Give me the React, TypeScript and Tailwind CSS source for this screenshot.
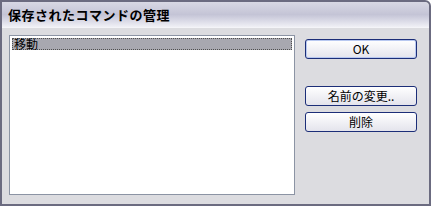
import React from 'react';

const FONT = { fontFamily: '"MS UI Gothic", "Noto Sans CJK JP", "Liberation Sans", sans-serif' };

const DialogButton: React.FC<{ label: string; primary?: boolean }> = ({ label, primary }) => (
  <button
    className={`h-[20px] w-[112px] rounded-[3px] border bg-gradient-to-b from-white to-[#e4e4ec] text-[12px] leading-none text-black ${
      primary ? 'border-[#1c2e78] shadow-[inset_0_0_0_1px_#b8c8f0]' : 'border-[#1c2e78]'
    }`}
  >
    {label}
  </button>
);

export default function App() {
  return (
    <div className="h-[206px] w-[431px] bg-white" style={FONT}>
      <div className="flex h-full w-full flex-col rounded-tr-[6px] border-[2px] border-[#6b6b80] bg-[#dcdce0]">
        {/* title bar */}
        <div className="flex h-[26px] items-center rounded-tr-[5px] border-b border-[#f4f4f8] bg-gradient-to-b from-[#d8d8e4] via-[#c4c4d6] to-[#f0f0f6] pl-[6px]">
          <span className="text-[13px] font-bold tracking-[0.5px] text-black">保存されたコマンドの管理</span>
        </div>
        <div className="flex flex-1 gap-[10px] pl-[7px] pt-[7px] pb-[8px]">
          {/* list */}
          <div className="h-[160px] w-[286px] border border-[#8c94a4] bg-white p-[2px]">
            <div className="h-[12px] border border-dotted border-[#505050] bg-[#a8a8b0] pl-[1px] text-[12px] leading-[10px] text-black">
              移動
            </div>
          </div>
          {/* buttons */}
          <div className="flex flex-col pt-[4px]">
            <DialogButton label="OK" primary />
            <div className="h-[27px]" />
            <DialogButton label="名前の変更.." />
            <div className="h-[6px]" />
            <DialogButton label="削除" />
          </div>
        </div>
      </div>
    </div>
  );
}
